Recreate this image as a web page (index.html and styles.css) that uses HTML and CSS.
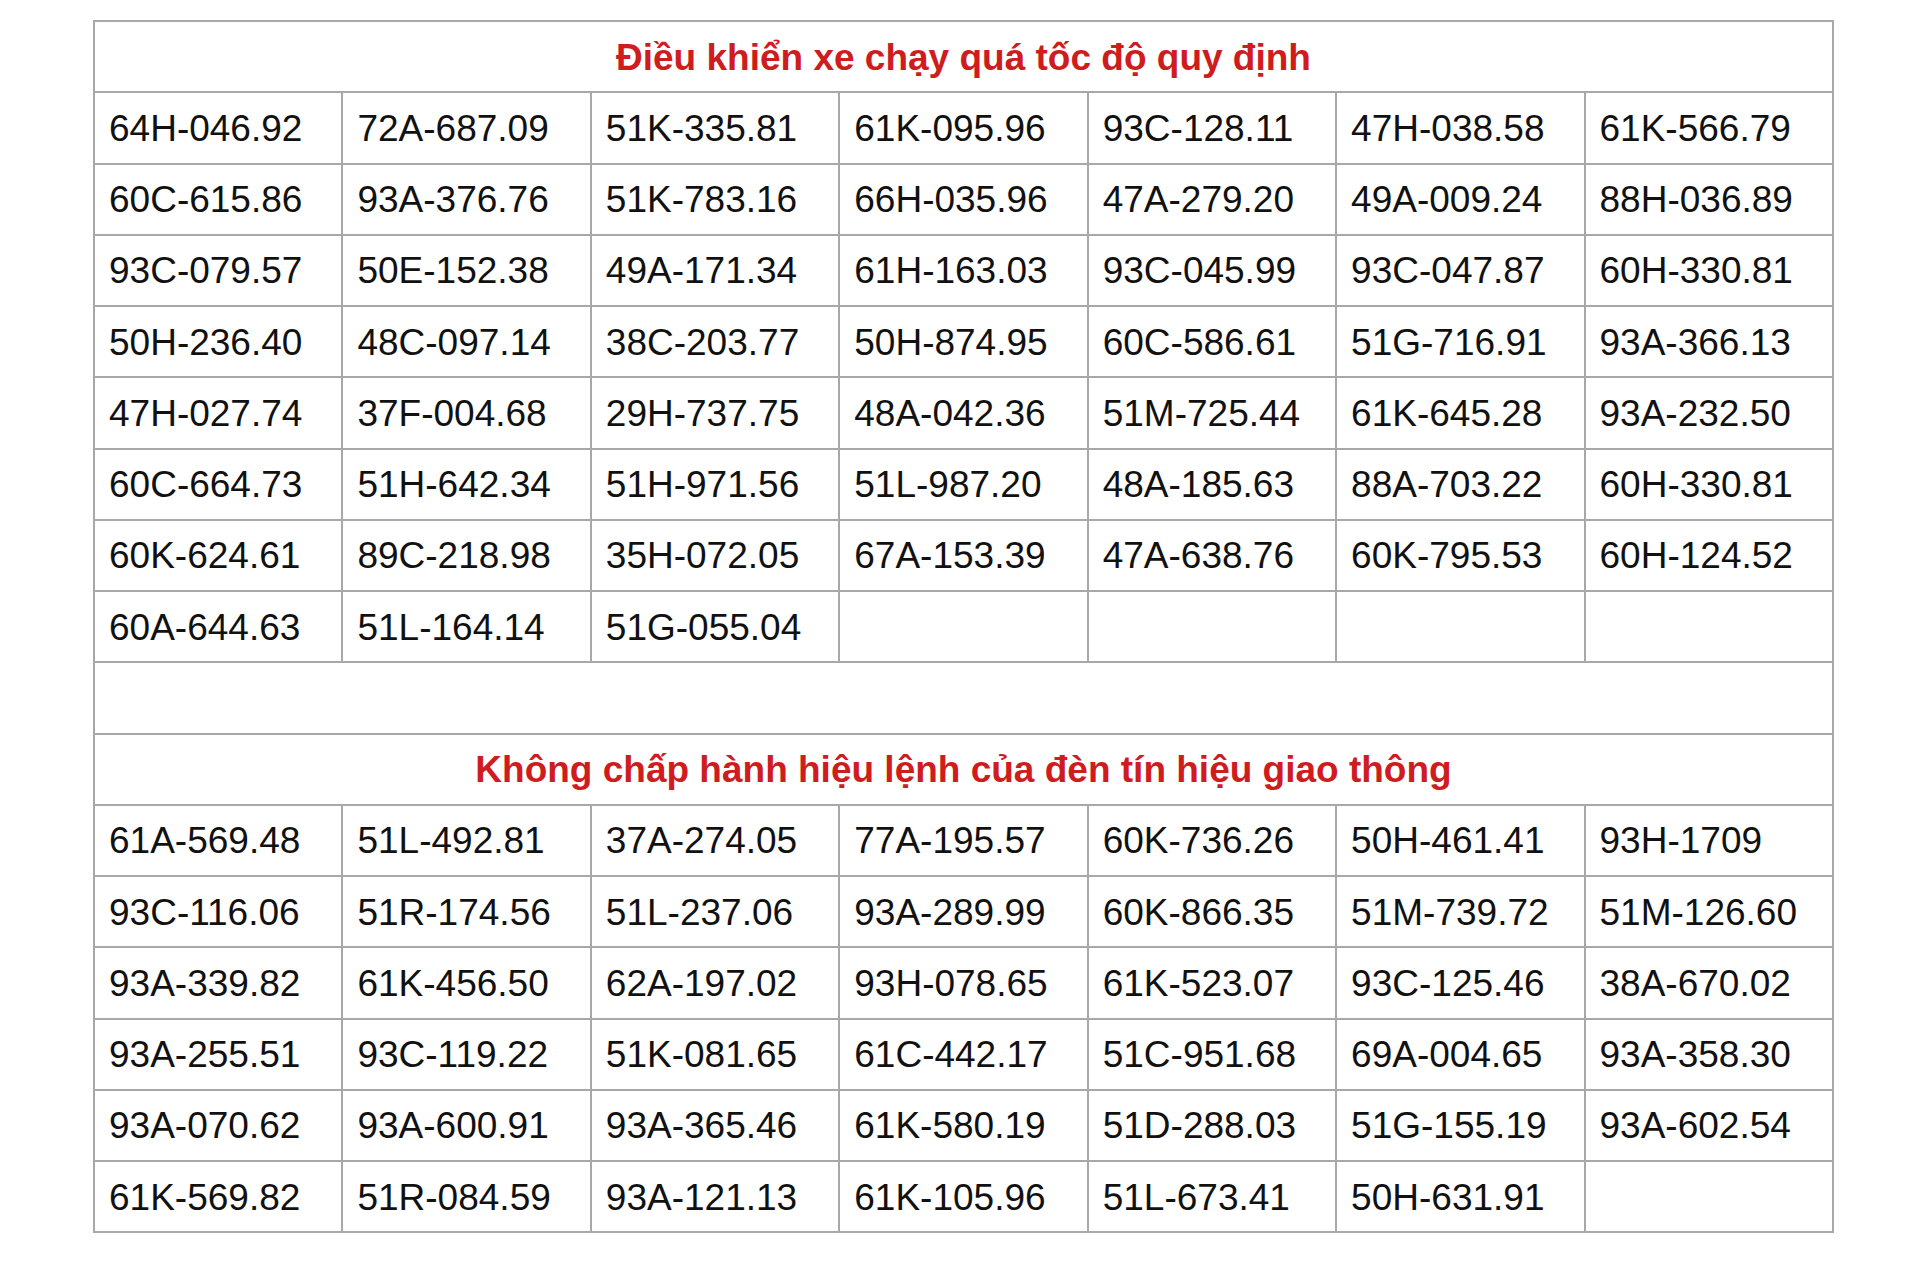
FILE: index.html
```html
<!DOCTYPE html>
<html lang="vi">
<head>
<meta charset="utf-8">
<title>Danh sách biển số vi phạm</title>
<link rel="stylesheet" href="styles.css">
</head>
<body>
<table class="plates">
<colgroup><col><col><col><col><col><col><col></colgroup>
<tbody>
<tr><th class="title" colspan="7">Điều khiển xe chạy quá tốc độ quy định</th></tr>
<tr><td>64H-046.92</td><td>72A-687.09</td><td>51K-335.81</td><td>61K-095.96</td><td>93C-128.11</td><td>47H-038.58</td><td>61K-566.79</td></tr>
<tr><td>60C-615.86</td><td>93A-376.76</td><td>51K-783.16</td><td>66H-035.96</td><td>47A-279.20</td><td>49A-009.24</td><td>88H-036.89</td></tr>
<tr><td>93C-079.57</td><td>50E-152.38</td><td>49A-171.34</td><td>61H-163.03</td><td>93C-045.99</td><td>93C-047.87</td><td>60H-330.81</td></tr>
<tr><td>50H-236.40</td><td>48C-097.14</td><td>38C-203.77</td><td>50H-874.95</td><td>60C-586.61</td><td>51G-716.91</td><td>93A-366.13</td></tr>
<tr><td>47H-027.74</td><td>37F-004.68</td><td>29H-737.75</td><td>48A-042.36</td><td>51M-725.44</td><td>61K-645.28</td><td>93A-232.50</td></tr>
<tr><td>60C-664.73</td><td>51H-642.34</td><td>51H-971.56</td><td>51L-987.20</td><td>48A-185.63</td><td>88A-703.22</td><td>60H-330.81</td></tr>
<tr><td>60K-624.61</td><td>89C-218.98</td><td>35H-072.05</td><td>67A-153.39</td><td>47A-638.76</td><td>60K-795.53</td><td>60H-124.52</td></tr>
<tr><td>60A-644.63</td><td>51L-164.14</td><td>51G-055.04</td><td></td><td></td><td></td><td></td></tr>
<tr><td class="spacer" colspan="7"></td></tr>
<tr><th class="title" colspan="7">Không chấp hành hiệu lệnh của đèn tín hiệu giao thông</th></tr>
<tr><td>61A-569.48</td><td>51L-492.81</td><td>37A-274.05</td><td>77A-195.57</td><td>60K-736.26</td><td>50H-461.41</td><td>93H-1709</td></tr>
<tr><td>93C-116.06</td><td>51R-174.56</td><td>51L-237.06</td><td>93A-289.99</td><td>60K-866.35</td><td>51M-739.72</td><td>51M-126.60</td></tr>
<tr><td>93A-339.82</td><td>61K-456.50</td><td>62A-197.02</td><td>93H-078.65</td><td>61K-523.07</td><td>93C-125.46</td><td>38A-670.02</td></tr>
<tr><td>93A-255.51</td><td>93C-119.22</td><td>51K-081.65</td><td>61C-442.17</td><td>51C-951.68</td><td>69A-004.65</td><td>93A-358.30</td></tr>
<tr><td>93A-070.62</td><td>93A-600.91</td><td>93A-365.46</td><td>61K-580.19</td><td>51D-288.03</td><td>51G-155.19</td><td>93A-602.54</td></tr>
<tr><td>61K-569.82</td><td>51R-084.59</td><td>93A-121.13</td><td>61K-105.96</td><td>51L-673.41</td><td>50H-631.91</td><td></td></tr>
</tbody>
</table>
</body>
</html>
```
FILE: styles.css
```css
html, body {
  margin: 0;
  padding: 0;
  background: #ffffff;
}

body {
  font-family: "Liberation Sans", Arial, sans-serif;
  color: #111111;
}

.plates {
  margin: 20px 0 0 93px;
  width: 1741px;
  table-layout: fixed;
  border-collapse: collapse;
  border: 2px solid #a4a4a4;
}

.plates td,
.plates th {
  box-sizing: border-box;
  height: 71.25px;
  padding: 2px 0 0 14px;
  border: 2px solid #a8a8a8;
  font-size: 37px;
  line-height: 42px;
  text-align: left;
  vertical-align: middle;
  white-space: nowrap;
}

.plates th.title {
  padding: 2px 0 0 0;
  text-align: center;
  font-weight: bold;
  color: #cf1c1e;
}

.plates td.spacer {
  padding: 0;
}
```
